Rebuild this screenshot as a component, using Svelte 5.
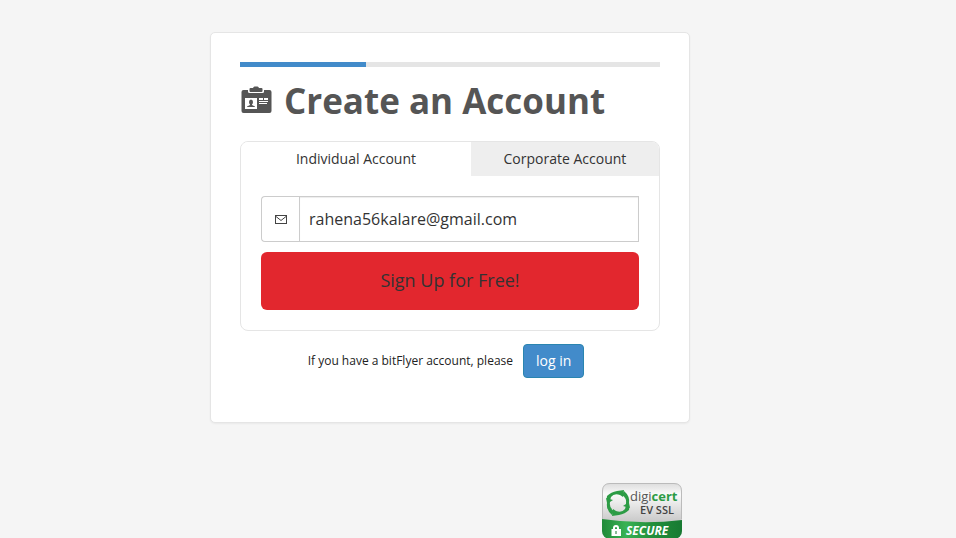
<script lang="ts">
  type AccountType = 'individual' | 'corporate';

  const tabs: { id: AccountType; label: string }[] = [
    { id: 'individual', label: 'Individual Account' },
    { id: 'corporate', label: 'Corporate Account' },
  ];

  let accountType = $state<AccountType>('individual');
  let email = $state('rahena56kalare@gmail.com');
  let progress = $state(30);

  function onSubmit(event: SubmitEvent): void {
    event.preventDefault();
  }
</script>

<div class="page">
  <main class="card">
    <div class="progress" role="progressbar" aria-label="Registration" aria-valuenow={progress}>
      <div class="progress-bar" style="width: {progress}%"></div>
    </div>

    <h1>
      <svg class="title-icon" viewBox="0 0 32 28" aria-hidden="true">
        <path
          fill="#555"
          d="M3 4h5v1.500q0 1.500 1.500 1.500h13q1.500 0 1.500-1.500V4h5.500q2 0 2 2v19q0 2-2 2H3.500q-2 0-2-2V6q0-2 2-2z"
        />
        <path fill="#555" d="M9.500 3q0-1 1-1h2.500q.5-1.500 1.500-1.500h3q1 0 1.500 1.500h2.500q1 0 1 1v2q0 1-1 1h-11q-1 0-1-1z" />
        <path fill="#fff" d="M5 12h12v11H5zM19 12h4v2h-4zM24 12h4v2h-4zM19 15h9v1h-9zM19 17h8v1h-8z" />
        <path fill="#555" d="M11 13.500q2 0 2 2.500 0 1.500-1 2.500v.5l3 1.500V21H7v-.5l3-1.500v-.5q-1-1-1-2.500 0-2.500 2-2.500z" />
      </svg>
      Create an Account
    </h1>

    <section class="panel">
      <div class="tabs" role="tablist">
        {#each tabs as tab}
          <button
            type="button"
            role="tab"
            class="tab"
            class:active={accountType === tab.id}
            aria-selected={accountType === tab.id}
            onclick={() => (accountType = tab.id)}
          >
            {tab.label}
          </button>
        {/each}
      </div>

      <form onsubmit={onSubmit}>
        <div class="input-group">
          <label class="addon" for="email" aria-label="Email address">
            <svg viewBox="0 0 12 9" aria-hidden="true">
              <rect x="0.5" y="0.5" width="11" height="8" />
              <path d="M1 1.500l5 4 5-4" />
            </svg>
          </label>
          <input id="email" type="email" bind:value={email} />
        </div>
        <button type="submit" class="signup">Sign Up for Free!</button>
      </form>
    </section>

    <p class="login">
      <span>If you have a bitFlyer account, please</span>
      <a href="#login" class="login-button">log in</a>
    </p>
  </main>

  <footer>
    <svg class="seal" viewBox="0 0 80 56" role="img" aria-label="DigiCert EV SSL Secure">
      <defs>
        <linearGradient id="seal-face" x1="0" y1="0" x2="0" y2="1">
          <stop offset="0" stop-color="#dcdcdc" />
          <stop offset="0.2" stop-color="#fafafa" />
          <stop offset="0.7" stop-color="#c8c8c8" />
        </linearGradient>
        <linearGradient id="seal-band" x1="0" y1="0" x2="1" y2="0">
          <stop offset="0" stop-color="#1f8a38" />
          <stop offset="0.3" stop-color="#39b254" />
          <stop offset="0.6" stop-color="#23913c" />
          <stop offset="1" stop-color="#187a32" />
        </linearGradient>
        <clipPath id="seal-shape">
          <rect width="80" height="56" rx="8" />
        </clipPath>
      </defs>
      <g clip-path="url(#seal-shape)">
        <rect width="80" height="56" fill="url(#seal-face)" />
        <path fill="url(#seal-band)" d="M0 36q40 6 80 1v19H0z" />
      </g>
      <path d="M.5 36V8q0-7.500 7.500-7.500h64q7.500 0 7.500 7.500v28" fill="none" stroke="#bbb" />
      <g fill="#2c9c45">
        <path d="M5 13q4-4 10-5l7-1-1 7-3-2q-6-2-9 2l-2 7q-3-3-2-8z" />
        <path d="M22 8q6 5 5 12l1 5-7-2 3-2q1-6-4-9z" />
        <path d="M27 27q-4 4-10 5l-7 1 1-7 3 2q6 2 9-2l2-7q3 3 2 8z" />
        <path d="M10 32q-6-5-5-12l-1-5 7 2-3 2q-1 6 4 9z" />
      </g>
      <text class="brand" x="28" y="18">digi<tspan class="brand-accent">cert</tspan></text>
      <text class="product" x="38" y="31">EV SSL</text>
      <path fill="#fff" d="M11 46v-1q0-3 3-3t3 3v1h2v7H9.500v-7zm2 0h2v-1q0-1-1-1t-1 1z" />
      <path fill="#187a32" d="M13.500 48h1v3h-1z" />
      <text class="secure" x="24" y="52">SECURE</text>
    </svg>
  </footer>
</div>

<style>
  :global(body) {
    margin: 0;
    overflow: hidden;
    background: #f5f5f5;
  }

  .page {
    padding: 32px 56px 0 0;
    color: #333;
    font-family: 'Open Sans', sans-serif;
    font-size: 14px;
    font-weight: 400;
  }

  .card {
    box-sizing: border-box;
    width: 100%;
    max-width: 480px;
    margin: 0 auto;
    padding: 29px 29px 44px;
    background: #fff;
    border: 1px solid #e5e5e5;
    border-radius: 5px;
    box-shadow: 0 1px 2px rgba(0, 0, 0, 0.05);
  }

  .progress {
    height: 5px;
    background: #e5e5e5;
  }

  .progress-bar {
    height: 100%;
    background: #428bca;
  }

  h1 {
    display: flex;
    align-items: center;
    gap: 12px;
    margin: 14px 0 20px;
    color: #555;
    font-size: 35px;
    font-weight: 700;
    line-height: 40px;
  }

  .title-icon {
    width: 32px;
    height: 28px;
    margin-bottom: 2px;
  }

  .panel {
    overflow: hidden;
    border: 1px solid #e5e5e5;
    border-radius: 8px;
  }

  .tabs {
    display: grid;
    grid-template-columns: 55% 45%;
  }

  button,
  input {
    color: inherit;
    font: inherit;
  }

  .tab {
    height: 34px;
    padding: 0 0 2px;
    background: #eee;
    border: 0;
    cursor: pointer;
  }

  .tab.active {
    background: #fff;
  }

  form {
    display: grid;
    gap: 10px;
    padding: 20px;
  }

  .input-group {
    display: flex;
    height: 46px;
  }

  .addon {
    box-sizing: border-box;
    display: flex;
    align-items: center;
    justify-content: center;
    width: 38px;
    border: 1px solid #ccc;
    border-right: 0;
    border-radius: 4px 0 0 4px;
  }

  .addon svg {
    width: 12px;
    height: 9px;
    fill: none;
    stroke: #444;
  }

  input {
    box-sizing: border-box;
    flex: 1;
    min-width: 0;
    padding: 0 9px;
    background: #fff;
    border: 1px solid #ccc;
    border-radius: 0;
    box-shadow: inset 0 1px 1px rgba(0, 0, 0, 0.075);
    font-size: 16px;
    outline: 0;
  }

  .signup {
    height: 58px;
    padding: 0 0 2px;
    background: #e2272e;
    border: 0;
    border-radius: 6px;
    font-size: 18px;
    cursor: pointer;
  }

  .login {
    display: flex;
    align-items: center;
    justify-content: center;
    gap: 10px;
    margin: 13px 8px 0 0;
    color: #222;
    font-size: 12px;
  }

  .login span {
    padding-bottom: 2px;
  }

  .login-button {
    padding: 6px 12px;
    color: #fff;
    background: #428bca;
    border: 1px solid #2a85b0;
    border-radius: 4px;
    font-size: 14px;
    line-height: 20px;
    text-decoration: none;
  }

  footer {
    display: flex;
    justify-content: flex-end;
    max-width: 464px;
    margin: 60px auto 0;
  }

  .seal {
    width: 80px;
    height: 56px;
  }

  .brand {
    fill: #555;
    font-size: 13px;
  }

  .brand-accent {
    fill: #2c9c45;
    font-weight: 700;
  }

  .product {
    fill: #444;
    font-size: 11px;
    font-weight: 600;
  }

  .secure {
    fill: #fff;
    font-size: 12px;
    font-style: italic;
    font-weight: 700;
  }
</style>
